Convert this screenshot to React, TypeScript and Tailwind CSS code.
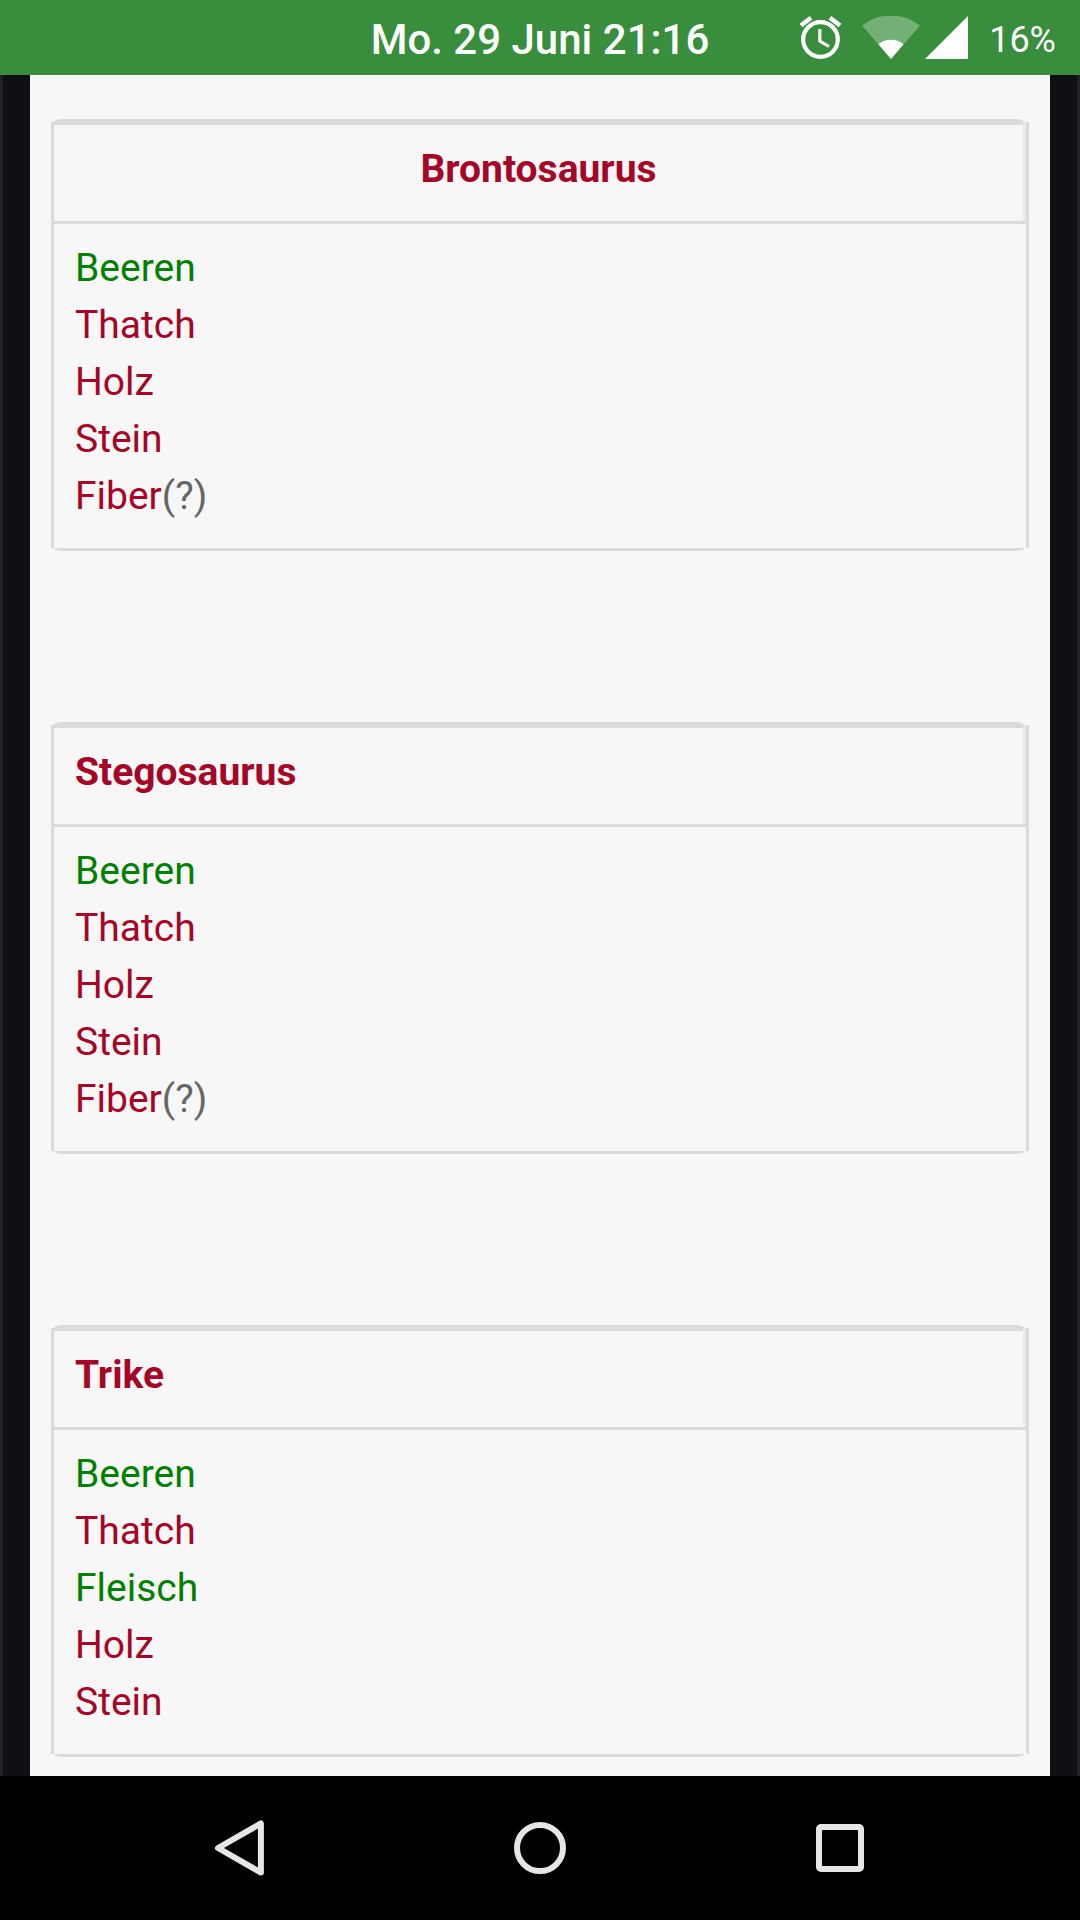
interface Resource {
    name: string;
    color: string;
    note?: string;
}

interface Dino {
    name: string;
    centered?: boolean;
    resources: Resource[];
}

const GREEN = 'text-[#008000]';
const RED = 'text-[#a50527]';

const dinos: Dino[] = [
    {
        name: 'Brontosaurus',
        centered: true,
        resources: [
            { name: 'Beeren', color: GREEN },
            { name: 'Thatch', color: RED },
            { name: 'Holz', color: RED },
            { name: 'Stein', color: RED },
            { name: 'Fiber', color: RED, note: '(?)' },
        ],
    },
    {
        name: 'Stegosaurus',
        resources: [
            { name: 'Beeren', color: GREEN },
            { name: 'Thatch', color: RED },
            { name: 'Holz', color: RED },
            { name: 'Stein', color: RED },
            { name: 'Fiber', color: RED, note: '(?)' },
        ],
    },
    {
        name: 'Trike',
        resources: [
            { name: 'Beeren', color: GREEN },
            { name: 'Thatch', color: RED },
            { name: 'Fleisch', color: GREEN },
            { name: 'Holz', color: RED },
            { name: 'Stein', color: RED },
        ],
    },
];

function StatusBar() {
    return (
        <header className="grid grid-cols-[1fr_auto_1fr] grid-rows-[75px] items-center h-[75px] shrink-0 bg-[#388e3c] text-white">
            <span className="col-start-2 text-[42px] leading-[75px] font-medium pt-1">Mo. 29 Juni 21:16</span>
            <div className="flex items-center justify-end h-full pr-6">
                {/* alarm */}
                <svg width="42" height="43" viewBox="0 0 42 43" fill="none" stroke="#fff" className="mr-5">
                    <circle cx="20.5" cy="23.5" r="17.3" strokeWidth="4.2" />
                    <path d="M1 9.5 11 1.8M30 1.8 40 9.5" strokeWidth="4.4" />
                    <path d="M19.8 13v12l9.2 5.5" strokeWidth="3.2" />
                </svg>
                {/* wifi */}
                <svg width="58" height="43" viewBox="0 0 58 43" fill="#fff" className="mr-[5px]">
                    <path d="M0 9.5A47 47 0 0 1 58 9.5L29 43Z" fillOpacity=".3" />
                    <path d="M16.5 28.2A20 20 0 0 1 41.5 28.2L29 43Z" />
                </svg>
                {/* mobile signal */}
                <svg width="43" height="43" viewBox="0 0 43 43" fill="#fff" className="mr-[21px]">
                    <path d="M43 0V43H0Z" />
                </svg>
                <span className="text-[36px] leading-[75px] pt-1.5">16%</span>
            </div>
        </header>
    );
}

function DinoCard({ dino }: { dino: Dino }) {
    return (
        <section className="flex flex-col">
            <div className="h-[3px] ml-[3px] mr-[5px] bg-[#dadada] rounded-t-[9px_3px]" />
            <div className="border-x-[3px] border-[#dadada]">
                <div className="flex h-[99px]">
                    <h2
                        className={`flex-1 border-t-[3px] border-[#dadada] pt-4 pl-[21px] font-bold ${RED} ${
                            dino.centered ? 'text-center pr-[21px]' : ''
                        }`}
                    >
                        {dino.name}
                    </h2>
                    <div className="w-[3px] bg-[#e9e9e9]" />
                </div>
                <div className="h-[3px] bg-[#dadada]" />
                <ul className="pt-4 pb-[23px] pl-[21px]">
                    {dino.resources.map((resource) => (
                        <li key={resource.name} className={resource.color}>
                            {resource.name}
                            {resource.note && <span className="text-[#666]">{resource.note}</span>}
                        </li>
                    ))}
                </ul>
            </div>
            <div className="h-[3px] ml-[3px] mr-[5px] bg-[#dadada] rounded-b-[9px_3px]" />
        </section>
    );
}

function NavigationBar() {
    return (
        <nav className="flex h-36 shrink-0 items-center justify-center gap-[240px] bg-black">
            <svg width="60" height="60" viewBox="0 0 60 60" fill="none" stroke="#e6e6e6" strokeWidth="6" strokeLinejoin="round">
                <path d="M8 30 50.9 5.4V54.6Z" />
            </svg>
            <svg width="60" height="60" viewBox="0 0 60 60" fill="none" stroke="#e6e6e6" strokeWidth="6">
                <circle cx="30" cy="30" r="23" />
            </svg>
            <svg width="60" height="60" viewBox="0 0 60 60" fill="none" stroke="#e6e6e6" strokeWidth="6">
                <rect x="9" y="9" width="42" height="42" rx="2" />
            </svg>
        </nav>
    );
}

export default function App() {
    return (
        <div className="flex flex-col w-[1080px] h-[1920px] overflow-hidden font-['Roboto',sans-serif]">
            <StatusBar />
            <main className="flex-1 border-x-[3px] border-[#202226] bg-[#0f1014] px-[27px]">
                <div className="flex flex-col gap-[171px] h-full bg-[#f7f7f7] pt-11 px-[21px] text-[39px] leading-[57px]">
                    {dinos.map((dino) => (
                        <DinoCard key={dino.name} dino={dino} />
                    ))}
                </div>
            </main>
            <NavigationBar />
        </div>
    );
}
